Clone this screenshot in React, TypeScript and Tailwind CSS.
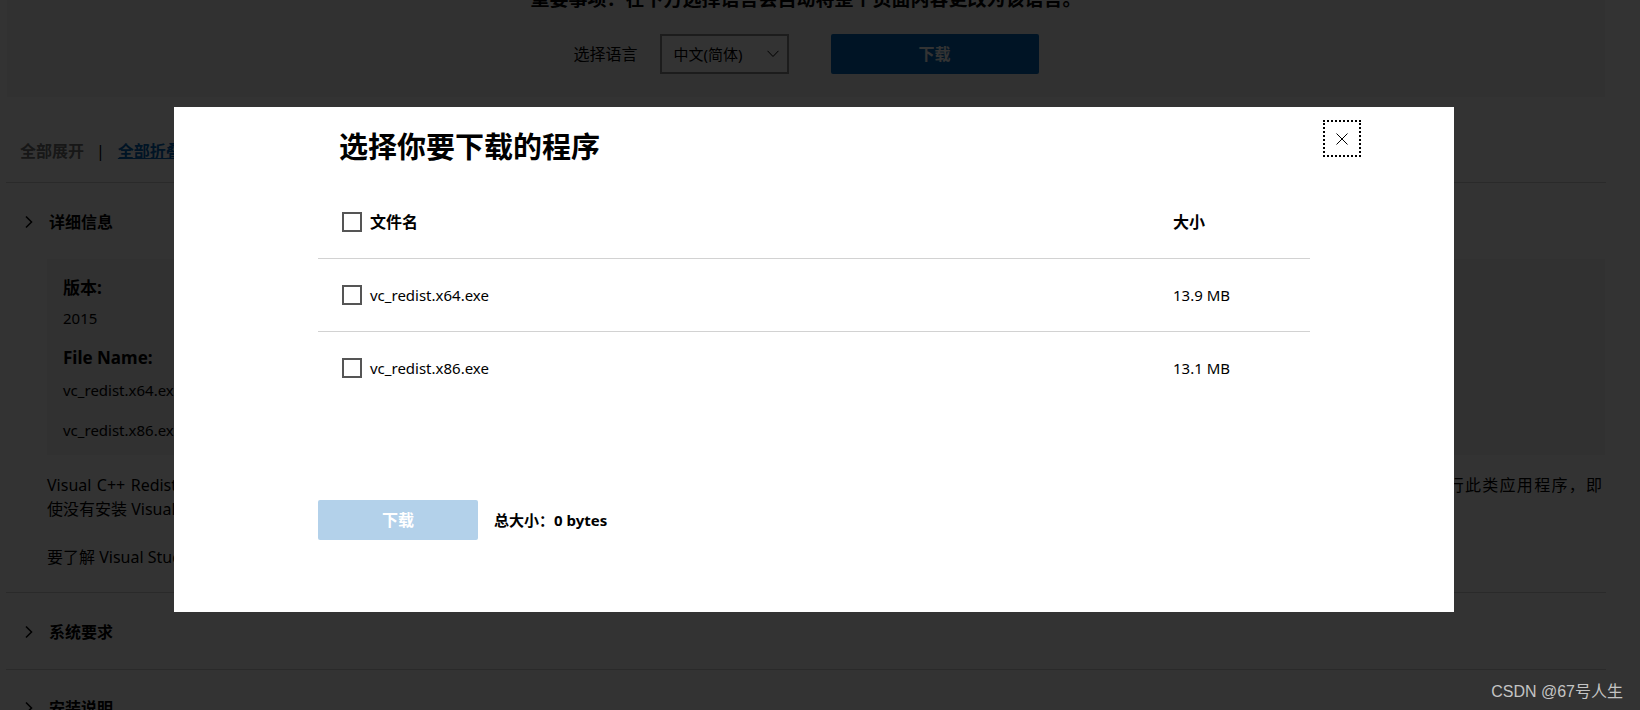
import React from "react";

const Chevron = () => (
  <svg width="10" height="14" viewBox="0 0 10 14" className="shrink-0">
    <path d="M2 1.5 L7.5 7 L2 12.5" fill="none" stroke="#000" strokeWidth="1.6" />
  </svg>
);

const Checkbox = () => <span className="block h-[20px] w-[20px] shrink-0 border-2 border-[#555]" />;

export default function App() {
  return (
    <div className="relative h-[710px] w-[1640px] overflow-hidden bg-white font-['Noto_Sans','Noto_Sans_CJK_SC',sans-serif] text-black">
      {/* underlying page */}
      <div className="ml-[6px] w-[1600px]">
        <div className="mx-px -mt-[15px] flex flex-col items-center bg-[#f2f2f2] pb-[23px]">
          <div className="h-[28px] text-[19px] font-bold leading-[28px]">
            重要事项：在下方选择语言会自动将整个页面内容更改为该语言。
          </div>
          <div className="mt-[21px] flex h-[40px] items-center">
            <span className="text-[16px]">选择语言</span>
            <div className="ml-[22px] flex h-[40px] w-[129px] items-center justify-between border-2 border-[#8c8c8c] bg-white pl-[12px] pr-[8px] text-[15px]">
              <span>中文(简体)</span>
              <svg width="12" height="8" viewBox="0 0 12 8">
                <path d="M0.5 0.8 L6 6.5 L11.5 0.8" fill="none" stroke="#000" strokeWidth="1" />
              </svg>
            </div>
            <div className="ml-[42px] flex h-[40px] w-[208px] items-center justify-center rounded-[2px] bg-[#0067b8] text-[16px] font-bold text-white">
              下载
            </div>
          </div>
        </div>

        <div className="mt-[34px] flex h-[40px] items-center pl-[14px] text-[16px] font-bold">
          <span className="text-[#737373]">全部展开</span>
          <span className="ml-[12px] mr-[13px] font-normal">|</span>
          <span className="text-[#0067b8] underline">全部折叠</span>
        </div>
        <div className="mt-[11px] h-px bg-[#d2d2d2]" />

        <div className="mt-[19px] flex h-[40px] items-center gap-[15px] pl-[18px]">
          <Chevron />
          <span className="text-[16px] font-bold">详细信息</span>
        </div>

        <div className="ml-[41px] mr-px mt-[17px] bg-[#f2f2f2] pb-[13px] pl-[16px] pt-[15px]">
          <div className="h-[28px] text-[17px] font-bold leading-[28px]">版本:</div>
          <div className="mt-[4px] h-[24px] text-[15px] leading-[24px]">2015</div>
          <div className="mt-[14px] h-[28px] text-[17px] font-bold leading-[28px]">File Name:</div>
          <div className="mt-[6px] h-[24px] text-[15px] leading-[24px]">vc_redist.x64.exe</div>
          <div className="mt-[16px] h-[24px] text-[15px] leading-[24px]">vc_redist.x86.exe</div>
        </div>

        <div className="ml-[41px] mt-[18px] w-[1555px] text-[16px] leading-[24px]">
          <div className="text-justify [text-align-last:justify]">
            Visual C++ Redistributable Packages 用于安装使用 Visual Studio 2015 生成的 C++ 应用程序运行时所需的 Visual C++ 库运行时组件。用户可以在未安装 Visual Studio 2015 的计算机上运行此类应用程序，即
          </div>
          <div>使没有安装 Visual Studio 2015 也是如此。</div>
          <div className="mt-[24px]">要了解 Visual Studio 2015 的最新版本，请访问 Visual Studio 下载页面。</div>
        </div>
        <div className="mt-[23px] h-px bg-[#d2d2d2]" />

        <div className="mt-[19px] flex h-[40px] items-center gap-[15px] pl-[18px]">
          <Chevron />
          <span className="text-[16px] font-bold">系统要求</span>
        </div>
        <div className="mt-[17px] h-px bg-[#d2d2d2]" />

        <div className="mt-[18px] flex h-[40px] items-center gap-[15px] pl-[18px]">
          <Chevron />
          <span className="text-[16px] font-bold">安装说明</span>
        </div>
      </div>

      {/* dim overlay */}
      <div className="absolute inset-0 bg-black/80" />

      {/* modal */}
      <div className="absolute left-[174px] top-[107px] h-[505px] w-[1280px] bg-white">
        <button className="absolute right-[93px] top-[13px] flex h-[37px] w-[38px] items-center justify-center border-2 border-dotted border-black">
          <svg width="12" height="12" viewBox="0 0 12 12">
            <path d="M0.5 0.5 L11.5 11.5 M11.5 0.5 L0.5 11.5" fill="none" stroke="#000" strokeWidth="1" />
          </svg>
        </button>

        <div className="ml-[144px] w-[992px] pt-[21px]">
          <h2 className="pl-[21px] text-[29px] font-bold leading-[38px]">选择你要下载的程序</h2>

          <div className="mt-[19px]">
            <div className="flex h-[73px] items-center text-[16px] font-bold">
              <div className="flex w-[855px] items-center gap-[8px] pl-[24px]">
                <Checkbox />
                <span>文件名</span>
              </div>
              <div>大小</div>
            </div>
            {[
              ["vc_redist.x64.exe", "13.9 MB"],
              ["vc_redist.x86.exe", "13.1 MB"],
            ].map(([name, size]) => (
              <div key={name} className="flex h-[73px] items-center border-t border-[#d2d2d2] text-[15px]">
                <div className="flex w-[855px] items-center gap-[8px] pl-[24px]">
                  <Checkbox />
                  <span>{name}</span>
                </div>
                <div>{size}</div>
              </div>
            ))}
          </div>

          <div className="mt-[96px] flex items-center">
            <div className="flex h-[40px] w-[160px] items-center justify-center rounded-[2px] bg-[#b3d1ea] text-[16px] font-bold text-white">
              下载
            </div>
            <span className="ml-[16px] text-[15px] font-bold">总大小：0 bytes</span>
          </div>
        </div>
      </div>

      {/* watermark */}
      <div className="absolute right-[17px] top-[682px] font-['Liberation_Sans','Noto_Sans_CJK_SC',sans-serif] text-[16px] leading-[20px] text-[#c4c4c4]">
        CSDN @67号人生
      </div>
    </div>
  );
}
